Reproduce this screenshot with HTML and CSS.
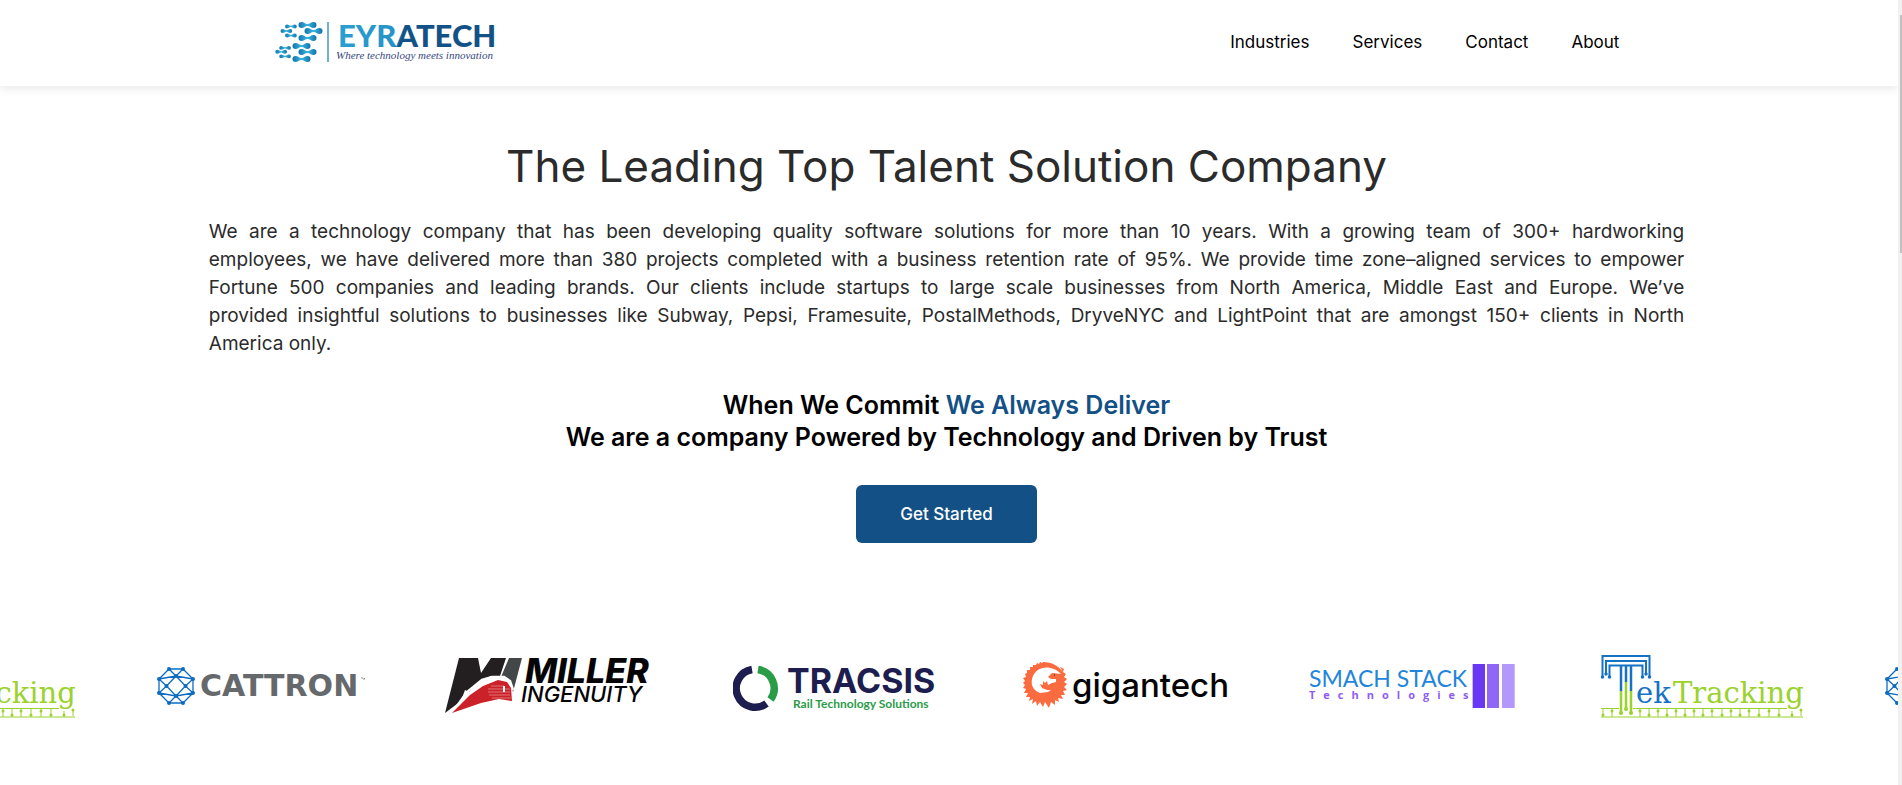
FILE: index.html
```html
<!DOCTYPE html>
<html lang="en">
<head>
<meta charset="utf-8">
<title>Eyratech</title>
<link rel="stylesheet" href="styles.css">
</head>
<body>
<svg class="defs" aria-hidden="true">
  <defs>
    <linearGradient id="drop"><stop offset="0" stop-color="#1272ac"/><stop offset=".5" stop-color="#3cb6e0"/><stop offset="1" stop-color="#1272ac"/></linearGradient>
    <linearGradient id="wordmark" gradientUnits="userSpaceOnUse" x1="65" y1="8" x2="148" y2="34"><stop offset="0" stop-color="#2a9fd0"/><stop offset=".66" stop-color="#2592c6"/><stop offset=".72" stop-color="#125287"/><stop offset="1" stop-color="#125287"/></linearGradient>
    <path id="pair" d="M3.500 0C6 0 7 2 9.500 2S13 0 15.500 0a3 3 0 0 1 0 6C13 6 12 4 9.500 4S6 6 3.500 6a3 3 0 0 1 0-6z" fill="url(#drop)"/>
    <symbol id="tek" viewBox="0 0 208 72">
      <g fill="none" stroke="#1672c4" stroke-width="2">
        <path d="M5.500 26V6h47v20M9 24V11h40v13M12.500 26V15.500h33V26"/>
        <path d="M24 16v25M29 16v16M34 16v25" stroke-width="2.500"/>
      </g>
      <path d="M5.500 27h0M9 24h0M12.500 27h0M45.500 27h0M49 24h0M52.500 27h0" stroke="#1672c4" stroke-width="3.500" stroke-linecap="round"/>
      <path d="M24 41v22M29 32v27M34 41v22" stroke="#9bd22d" stroke-width="2.500"/>
      <path d="M24 63h0M29 59h0M34 63h0" stroke="#9bd22d" stroke-width="4" stroke-linecap="round"/>
      <path d="M4 58.500h18M36 58.500h154M4 67h202M6 58v9M15 58v9M43 58v9M52 58v9M61 58v9M70 58v9M79 58v9M88 58v9M97 58v9M106 58v9M115 58v9M125 58v9M134 58v9M143 58v9M152 58v9M162 58v9M172 58v9M182 58v9M195 61v6M204 60v6" stroke="#9bd22d" fill="none"/>
      <path d="M15 61h0M43 61h0M61 61h0M79 61h0M97 61h0M115 61h0M134 61h0M152 61h0M172 61h0M204 60h0M6 65h0M52 65h0M70 65h0M88 65h0M106 65h0M125 65h0M143 65h0M162 65h0M182 65h0M195 65h0" stroke="#9bd22d" stroke-width="3" stroke-linecap="round"/>
      <text class="slab slab-blue" x="39" y="53">ek</text>
      <text class="slab slab-green" x="76" y="53">Tracking</text>
    </symbol>
    <symbol id="cattron" viewBox="0 0 208 72">
      <path d="M12 19h14l10 10v14L26 53H12L2 43V29zM12 19l7 7 7-7M2 29l17-3 17 3M2 43l17 3 17-3M12 53l7-7 7 7M19 26L9.500 36 19 46l9.500-10zM2 29l7.500 7L2 43M36 29l-7.500 7 7.500 7" fill="none" stroke="#0d6cc0" stroke-width="1.300"/>
      <path d="M12 19h0M26 19h0M36 29h0M36 43h0M26 53h0M12 53h0M2 43h0M2 29h0M19 26h0M9.500 36h0M19 46h0M28.500 36h0" stroke="#0d6cc0" stroke-width="4" stroke-linecap="round"/>
      <text class="cattron-name" x="43" y="46">CATTRON</text>
      <path d="M204 28h2M207 30v-2l1 1" stroke="#66696c" stroke-width=".7" fill="none"/>
    </symbol>
  </defs>
</svg>

<div class="shell">
<div class="page">
  <header class="header">
    <div class="header-inner">
      <a class="brand" href="#" aria-label="Eyratech">
        <svg width="232" height="50" viewBox="0 0 232 50">
          <use href="#pair" x="23" y="4"/><use href="#pair" x="29" y="10"/><use href="#pair" x="23" y="17"/>
          <use href="#pair" x="17" y="25"/><use href="#pair" x="23" y="31"/><use href="#pair" x="17" y="38"/>
          <g transform="scale(.65)"><use href="#pair" x="15" y="10"/><use href="#pair" x="8" y="17"/><use href="#pair" x="15" y="24"/><use href="#pair" x="6" y="43"/><use href="#pair" x="0" y="49"/><use href="#pair" x="6" y="56"/></g>
          <path d="M53 4v40" stroke="#4597c4" stroke-width="1.500"/>
          <text class="brand-name" x="63" y="29" fill="url(#wordmark)">EYRATECH</text>
          <text class="brand-tag" x="61" y="41">Where technology meets innovation</text>
        </svg>
      </a>
      <nav class="nav">
        <a href="#">Industries</a><a href="#">Services</a><a href="#">Contact</a><a href="#">About</a>
      </nav>
    </div>
  </header>
  <main>
    <section class="intro">
      <h1>The Leading Top Talent Solution Company</h1>
      <p class="lead">
        <span class="full">We are a technology company that has been developing quality software solutions for more than 10 years. With a growing team of 300+ hardworking</span>
        <span class="full">employees, we have delivered more than 380 projects completed with a business retention rate of 95%. We provide time zone–aligned services to empower</span>
        <span class="full">Fortune 500 companies and leading brands. Our clients include startups to large scale businesses from North America, Middle East and Europe. We’ve</span>
        <span class="full">provided insightful solutions to businesses like Subway, Pepsi, Framesuite, PostalMethods, DryveNYC and LightPoint that are amongst 150+ clients in North</span>
        America only.
      </p>
      <h2>When We Commit <span>We Always Deliver</span><br>We are a company Powered by Technology and Driven by Trust</h2>
      <button class="cta" type="button">Get Started</button>
    </section>
    <section class="clients" aria-label="Clients">
      <svg viewBox="0 0 208 72"><use href="#tek"/></svg>
      <svg viewBox="0 0 208 72"><use href="#cattron"/></svg>
      <svg viewBox="0 0 208 72">
        <path d="M14 8h19l3 15L46 8h15l-6 18h-9l-9 4-13 12-4-2-4 11L0 63z" fill="#231f20"/>
        <path d="M64 8h13l-9 34-4-12-8-3z" fill="#444748"/>
        <path d="M7 63l15-21 15-12 10-3 12 0 6 4 3 9" fill="none" stroke="#fff" stroke-width="2.500"/>
        <path d="M7 63l18-18 13-9 15-6 9 2 4 6 1 13-13-2-18 4z" fill="#cb2229"/>
        <path d="M46 36h13M43 39h22M43 42h22M44 45h21M47 48h19" stroke="#e98b8b" stroke-width=".8"/>
        <path d="M59 36v6" stroke="#fff" stroke-width="2"/>
        <text class="miller-name" x="80" y="33">MILLER</text>
        <text class="miller-sub" x="76" y="52">INGENUITY</text>
      </svg>
      <svg viewBox="0 0 208 72">
        <path d="M19 19.500A19 19 0 1 0 33.500 53.500" fill="none" stroke="#1d1d4f" stroke-width="7.500"/>
        <path d="M25 19.500A19 19 0 0 1 37.500 49.500" fill="none" stroke="#2a9c47" stroke-width="7.500"/>
        <text class="tracsis-name" x="54" y="43">TRACSIS</text>
        <text class="tracsis-sub" x="60" y="58">Rail Technology Solutions</text>
      </svg>
      <svg viewBox="0 0 208 72">
        <path d="M44 25C39 16 31 12 22 12l-1 1-2-1-1 2-2-1-1 2-3 0 0 2-3 0 0 3-3 0 0 3-2 1 1 3-3 1 2 3-2 2 2 2-2 3 3 1-2 4 4 0-2 4 4 0-1 4 4-2-1 5 4-3 1 5 3-4 3 5 2-5 4 6 2-6 4 3 0-5 4 2-1-4 5 1-2-4 4 0-2-4 4-1-3-3 3-3-3-2 3-3-3-2 2-3-3-2 1-3-4-2z" fill="#fb6b40"/>
        <path d="M40 24C32 15 17 15 12 26c-3 7-1 14 7 17l8-1 3-2-4 0-5-2-2-4 3 1 0-4 2 2 2-2 1 4 4-2 4-1 0-3-5 0-3-2 4-4z" fill="#fff"/>
        <path d="M33 25h1" stroke="#231f20" stroke-width="1.200"/>
        <text class="giga-name" x="51" y="47">gigantech</text>
      </svg>
      <svg viewBox="0 0 208 72">
        <text class="smach-name" x="0" y="37">SMACH STACK</text>
        <text class="smach-sub" x="0" y="49">Technologies</text>
        <path d="M164 14h12v44h-12z" fill="#6838f4"/><path d="M178 14h12v44h-12z" fill="#8f66f6"/><path d="M193 14h12v44h-12z" fill="#b397fa"/>
        <path d="M163.500 14v44M205.500 14v44" stroke="#cbb8fb"/>
      </svg>
      <svg viewBox="0 0 208 72"><use href="#tek"/></svg>
      <svg viewBox="0 0 208 72"><use href="#cattron"/></svg>
    </section>
  </main>
</div>
<div class="scrollbar" aria-hidden="true"><div class="thumb"></div></div>
</div>
</body>
</html>
```
FILE: styles.css
```css
body {
  margin: 0;
  font-family: Inter, "Open Sans", sans-serif;
  background: #fff;
}
.defs { position: absolute; width: 0; height: 0; }

.shell { display: flex; min-height: 100vh; }
.page { flex: 1; min-width: 0; overflow: hidden; }
.scrollbar { width: 4px; padding-top: 15px; box-sizing: border-box; background: #f1f1f1; }
.thumb { height: 238px; margin-left: 2px; background: #c1c1c1; }

.header { padding-right: 4px; box-shadow: 0 2px 10px rgba(0, 0, 0, .1); }
.header-inner {
  display: flex;
  justify-content: space-between;
  align-items: center;
  width: 71%;
  height: 86px;
  margin: 0 auto;
}
.brand svg { display: block; overflow: visible; }
.brand-name { font: 900 31px Lato, sans-serif; }
.brand-tag { font: italic 11px "Liberation Serif", serif; fill: #35487f; }
.nav { display: flex; gap: 43px; padding-bottom: 2px; }
.nav a { color: #000; font-size: 17px; line-height: 24px; text-decoration: none; }

.intro {
  width: 78%;
  margin: 0 auto;
  padding: 56px 5px 0 0;
  box-sizing: border-box;
  text-align: center;
}
h1 { margin: 0 0 28px; color: #2b2b2b; font-size: 44px; font-weight: 400; line-height: 48px; }
.lead { margin: 0; color: #2b2b2b; font-size: 19px; line-height: 28px; text-align: justify; }
.full { display: block; text-align-last: justify; }
h2 { margin: 31px 0 32px; color: #000; font-size: 25px; font-weight: 600; line-height: 32px; }
h2 span { color: #125085; }
.cta {
  padding: 17px 44px;
  border: 0;
  border-radius: 6px;
  background: #125085;
  color: #fff;
  font: 500 17px/24px Inter, sans-serif;
}

.clients { display: flex; gap: 80px; margin: 107px 0 0 -131px; }
.clients svg { flex: none; width: 208px; height: 72px; }
.slab { font: 29px "DejaVu Serif", serif; }
.slab-blue { fill: #1672c4; }
.slab-green { fill: #9bd22d; }
.cattron-name { font: bold 30px "DejaVu Sans", sans-serif; fill: #66696c; }
.miller-name { font: italic 800 34px Inter, sans-serif; fill: #050505; }
.miller-sub { font: italic 500 22px Inter, sans-serif; fill: #050505; }
.tracsis-name { font: 700 34px Inter, sans-serif; fill: #1d1d4f; }
.tracsis-sub { font: 700 12px Lato, sans-serif; fill: #2a9c47; }
.giga-name { font: 500 33px Inter, sans-serif; fill: #050505; }
.smach-name { font: 23px Lato, sans-serif; fill: #1f86dc; }
.smach-sub { font: 700 11px "Open Sans", sans-serif; fill: #8f5cf6; letter-spacing: 8px; }
```
